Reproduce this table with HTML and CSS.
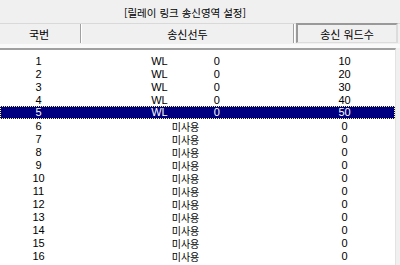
FILE: index.html
```html
<!DOCTYPE html>
<html lang="ko">
<head>
<meta charset="utf-8">
<link rel="stylesheet" href="styles.css">
</head>
<body>
<div class="panel">
  <div class="title">[릴레이 링크 송신영역 설정]</div>
  <div class="header">
    <div class="hcell hc1">국번</div>
    <div class="hcell hc2">송신선두</div>
    <div class="hbox">송신 워드수</div>
  </div>
  <div class="strip"></div>
  <div class="list">
    <div class="row"><span class="c1">1</span><span class="c2"><span>WL</span><span>0</span></span><span class="c3">10</span></div>
    <div class="row"><span class="c1">2</span><span class="c2"><span>WL</span><span>0</span></span><span class="c3">20</span></div>
    <div class="row"><span class="c1">3</span><span class="c2"><span>WL</span><span>0</span></span><span class="c3">30</span></div>
    <div class="row"><span class="c1">4</span><span class="c2"><span>WL</span><span>0</span></span><span class="c3">40</span></div>
    <div class="row selected"><span class="c1">5</span><span class="c2"><span>WL</span><span>0</span></span><span class="c3">50</span></div>
    <div class="row"><span class="c1">6</span><span class="c2 ko">미사용</span><span class="c3">0</span></div>
    <div class="row"><span class="c1">7</span><span class="c2 ko">미사용</span><span class="c3">0</span></div>
    <div class="row"><span class="c1">8</span><span class="c2 ko">미사용</span><span class="c3">0</span></div>
    <div class="row"><span class="c1">9</span><span class="c2 ko">미사용</span><span class="c3">0</span></div>
    <div class="row"><span class="c1">10</span><span class="c2 ko">미사용</span><span class="c3">0</span></div>
    <div class="row"><span class="c1">11</span><span class="c2 ko">미사용</span><span class="c3">0</span></div>
    <div class="row"><span class="c1">12</span><span class="c2 ko">미사용</span><span class="c3">0</span></div>
    <div class="row"><span class="c1">13</span><span class="c2 ko">미사용</span><span class="c3">0</span></div>
    <div class="row"><span class="c1">14</span><span class="c2 ko">미사용</span><span class="c3">0</span></div>
    <div class="row"><span class="c1">15</span><span class="c2 ko">미사용</span><span class="c3">0</span></div>
    <div class="row"><span class="c1">16</span><span class="c2 ko">미사용</span><span class="c3">0</span></div>
  </div>
</div>
</body>
</html>
```
FILE: styles.css
```css
html, body {
  margin: 0;
  padding: 0;
  background: #f0f0f0;
}
body {
  width: 400px;
  height: 265px;
  overflow: hidden;
  font-family: "Liberation Sans", "Noto Sans CJK KR", sans-serif;
  font-size: 11px;
  color: #000;
}
.panel {
  display: flex;
  flex-direction: column;
}
.title {
  height: 23px;
  line-height: 26px;
  box-sizing: border-box;
  text-align: center;
  margin-right: 30px;
  font-family: "Noto Sans CJK KR", sans-serif;
  font-size: 10.5px;
}
.header {
  display: flex;
  height: 20px;
  border-top: 1px solid #d9d9d9;
  box-sizing: border-box;
  font-family: "Noto Sans CJK KR", sans-serif;
}
.hcell {
  display: flex;
  align-items: center;
  justify-content: center;
  border-right: 1px solid #a0a0a0;
  box-shadow: 1px 0 0 #ffffff;
}
.hc1 {
  width: 78px;
  padding-right: 2px;
  margin-right: 1px;
}
.hc2 {
  width: 211px;
  margin-right: 2px;
}
.hbox {
  width: 102px;
  box-sizing: border-box;
  display: flex;
  align-items: center;
  justify-content: center;
  border-top: 2px solid #999999;
  border-left: 2px solid #999999;
  border-right: 2px solid #dcdcdc;
  border-bottom: 1px solid #dcdcdc;
  margin-top: -1px;
}
.strip {
  height: 4px;
  margin-top: 1px;
  background: #fafafa;
}
.list {
  width: 396px;
  height: 220px;
  background: #ffffff;
  border-top: 2px solid #a0a0a0;
  border-right: 1px solid #e3e3e3;
  padding-top: 5px;
  box-sizing: border-box;
}
.row {
  display: grid;
  grid-template-columns: 77px 217px 101px;
  height: 13px;
  line-height: 13px;
}
.c1, .c3 {
  text-align: center;
}
.c2 {
  display: flex;
  justify-content: center;
  gap: 46px;
}
.ko {
  font-family: "Noto Sans CJK KR", sans-serif;
  font-size: 10px;
}
.selected {
  background: #000080;
  color: #ffffff;
  outline: 1px dotted #ffff80;
  outline-offset: -1px;
  margin-top: -1px;
  margin-bottom: 1px;
}
```
